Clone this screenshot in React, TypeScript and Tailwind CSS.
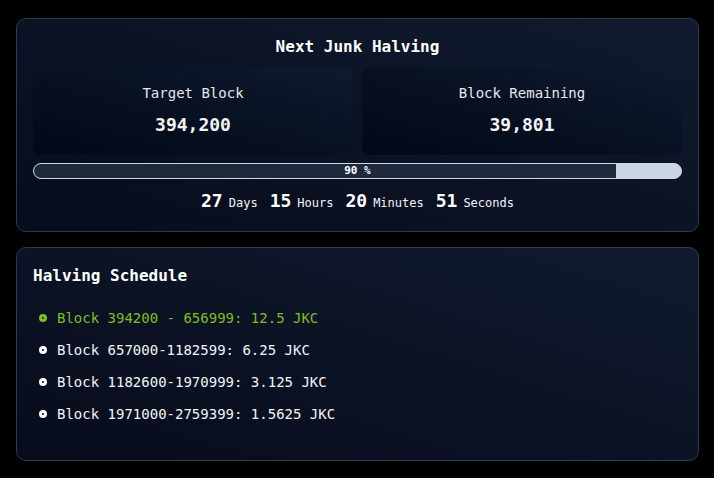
import React from 'react';

const schedule = [
  { label: 'Block 394200 - 656999: 12.5 JKC', active: true },
  { label: 'Block 657000-1182599: 6.25 JKC', active: false },
  { label: 'Block 1182600-1970999: 3.125 JKC', active: false },
  { label: 'Block 1971000-2759399: 1.5625 JKC', active: false },
];

const countdown = [
  { value: '27', unit: 'Days' },
  { value: '15', unit: 'Hours' },
  { value: '20', unit: 'Minutes' },
  { value: '51', unit: 'Seconds' },
];

const StatBox: React.FC<{ label: string; value: string }> = ({ label, value }) => (
  <div className="flex flex-col items-center rounded-lg bg-gradient-to-tr from-[#030816] to-[#101a2d] py-4">
    <div className="text-sm leading-5 text-gray-200">{label}</div>
    <div className="mt-2 text-lg leading-7 font-semibold text-gray-100">{value}</div>
  </div>
);

const App: React.FC = () => {
  const progress = 90;

  return (
    <div
      className="min-h-[478px] bg-black pl-4 pr-[15px] pt-[18px] text-gray-100"
      style={{ fontFamily: '"DejaVu Sans Mono", "Liberation Mono", monospace' }}
    >
      <div className="grid auto-rows-fr gap-[15px]">
        {/* Next halving */}
        <div className="rounded-[10px] border border-[#2c3a52] bg-gradient-to-tr from-[#070c1b] to-[#111a2e] p-4">
          <h2 className="text-center text-base leading-6 font-bold text-white">Next Junk Halving</h2>

          <div className="mt-2 grid grid-cols-2 gap-[9px]">
            <StatBox label="Target Block" value="394,200" />
            <StatBox label="Block Remaining" value="39,801" />
          </div>

          <div className="relative mt-2 h-4 overflow-hidden rounded-full border border-[#cbd5e1] bg-[#cbd5e1]">
            <div className="h-full bg-[#1e293b]" style={{ width: `${progress}%` }} />
            <div className="absolute inset-0 flex items-center justify-center text-[11px] font-bold text-white">
              {progress} %
            </div>
          </div>

          <div className="mt-2 flex items-baseline justify-center">
            {countdown.map((c, i) => (
              <div key={c.unit} className={`flex items-baseline ${i > 0 ? 'ml-3' : ''}`}>
                <span className="text-lg leading-7 font-bold text-white">{c.value}</span>
                <span className="ml-1.5 text-xs text-gray-100">{c.unit}</span>
              </div>
            ))}
          </div>
        </div>

        {/* Schedule */}
        <div className="rounded-[10px] border border-[#2c3a52] bg-gradient-to-tr from-[#070c1b] to-[#111a2e] p-4">
          <h2 className="text-base leading-6 font-bold text-white">Halving Schedule</h2>
          <ul className="mt-3.5 pl-1.5">
            {schedule.map((s) => (
              <li
                key={s.label}
                className={`flex items-center py-1.5 text-sm leading-5 ${s.active ? 'text-[#7fbf1e]' : 'text-gray-100'}`}
              >
                <span
                  className={`mr-[10px] h-2 w-2 rounded-full border-[3px] ${s.active ? 'border-[#7fbf1e]' : 'border-white'}`}
                />
                {s.label}
              </li>
            ))}
          </ul>
        </div>
      </div>
    </div>
  );
};

export default App;
